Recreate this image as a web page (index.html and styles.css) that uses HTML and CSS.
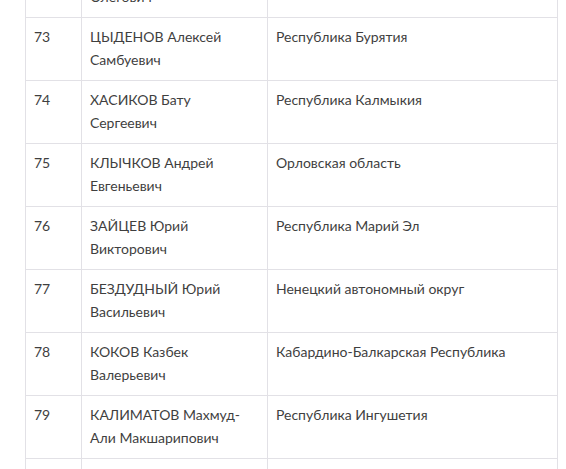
FILE: index.html
```html
<!DOCTYPE html>
<html lang="ru">
<head>
<meta charset="utf-8">
<title>Список</title>
<link rel="stylesheet" href="styles.css">
</head>
<body>
<div class="viewport">
<table class="list">
<colgroup><col class="c-num"><col class="c-name"><col class="c-region"></colgroup>
<tbody>
<tr><td>72</td><td>ПАРФЁНОВ Игорь Олегович</td><td>Республика Алтай</td></tr>
<tr><td>73</td><td>ЦЫДЕНОВ Алексей Самбуевич</td><td>Республика Бурятия</td></tr>
<tr><td>74</td><td>ХАСИКОВ Бату Сергеевич</td><td>Республика Калмыкия</td></tr>
<tr><td>75</td><td>КЛЫЧКОВ Андрей Евгеньевич</td><td>Орловская область</td></tr>
<tr><td>76</td><td>ЗАЙЦЕВ Юрий Викторович</td><td>Республика Марий Эл</td></tr>
<tr><td>77</td><td>БЕЗДУДНЫЙ Юрий Васильевич</td><td>Ненецкий автономный округ</td></tr>
<tr><td>78</td><td>КОКОВ Казбек Валерьевич</td><td>Кабардино-Балкарская Республика</td></tr>
<tr><td>79</td><td>КАЛИМАТОВ Махмуд-Али Макшарипович</td><td>Республика Ингушетия</td></tr>
<tr><td>80</td><td>ГЛОБА Олег Олегович</td><td>Республика Крым</td></tr>
</tbody>
</table>
</div>
</body>
</html>
```
FILE: styles.css
```css
html, body {
  margin: 0;
  padding: 0;
  background: #fff;
}
.viewport {
  height: 469px;
  overflow: hidden;
}
.list {
  margin: -46px 0 0 25px;
  width: 532px;
  table-layout: fixed;
  border-collapse: collapse;
  font-family: Lato, "Open Sans", sans-serif;
  font-size: 14px;
  line-height: 23px;
  color: #3f3f3f;
}
.c-num { width: 56px; }
.c-name { width: 186px; }
.c-region { width: 290px; }
.list td {
  border: 1px solid #e2e1e6;
  padding: 7px 8px 9px;
  height: 46px;
  vertical-align: top;
  text-align: left;
}
```
